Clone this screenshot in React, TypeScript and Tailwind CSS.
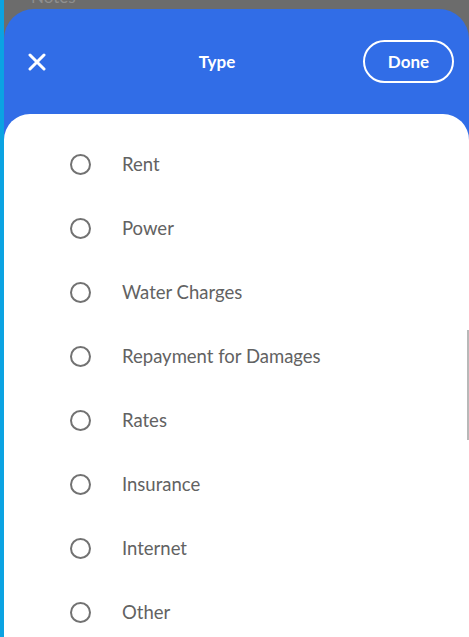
import React from "react";

const items = [
  "Rent",
  "Power",
  "Water Charges",
  "Repayment for Damages",
  "Rates",
  "Insurance",
  "Internet",
  "Other",
];

export default function App() {
  return (
    <div
      className="relative flex w-[469px] h-[637px] overflow-hidden bg-[#6c6c6c]"
      style={{ fontFamily: "Lato, 'Noto Sans', sans-serif" }}
    >
      <div className="w-[4px] h-full bg-[#0ba3e2] shrink-0" />
      <div className="flex flex-col flex-1 min-w-0">
        <div className="h-[9px] shrink-0 overflow-hidden pl-[27px]">
          <div className="-mt-[12px] text-[17px] leading-[17px] text-[#8f8f8f]">Notes</div>
        </div>
        <div className="flex flex-col flex-1 rounded-t-[30px] bg-[#316de7]">
          <div className="flex items-center h-[105px] shrink-0">
            <div className="w-[67px] pl-[24px] flex items-center shrink-0">
              <svg width="18" height="18" viewBox="0 0 18 18">
                <path d="M2 2 L16 16 M16 2 L2 16" stroke="white" strokeWidth="3" strokeLinecap="round" />
              </svg>
            </div>
            <div className="flex-1 text-center text-white font-bold text-[17px]">Type</div>
            <div className="mr-[15px] w-[91px] h-[43px] rounded-full border-2 border-white flex items-center justify-center text-white font-bold text-[17px]">
              Done
            </div>
          </div>
          <div className="flex-1 bg-white rounded-t-[26px] pt-[18px]">
            {items.map((it) => (
              <div key={it} className="flex items-center h-[64px]">
                <div className="ml-[66px] w-[21px] h-[21px] rounded-full border-[2.5px] border-[#727272] shrink-0" />
                <div className="ml-[31px] -mt-[1px] text-[18.5px] leading-[22px] text-[#626262]">{it}</div>
              </div>
            ))}
          </div>
        </div>
      </div>
      <div className="absolute left-[467px] top-[330px] w-[2px] h-[110px] bg-[#b8b8b8]" />
    </div>
  );
}
